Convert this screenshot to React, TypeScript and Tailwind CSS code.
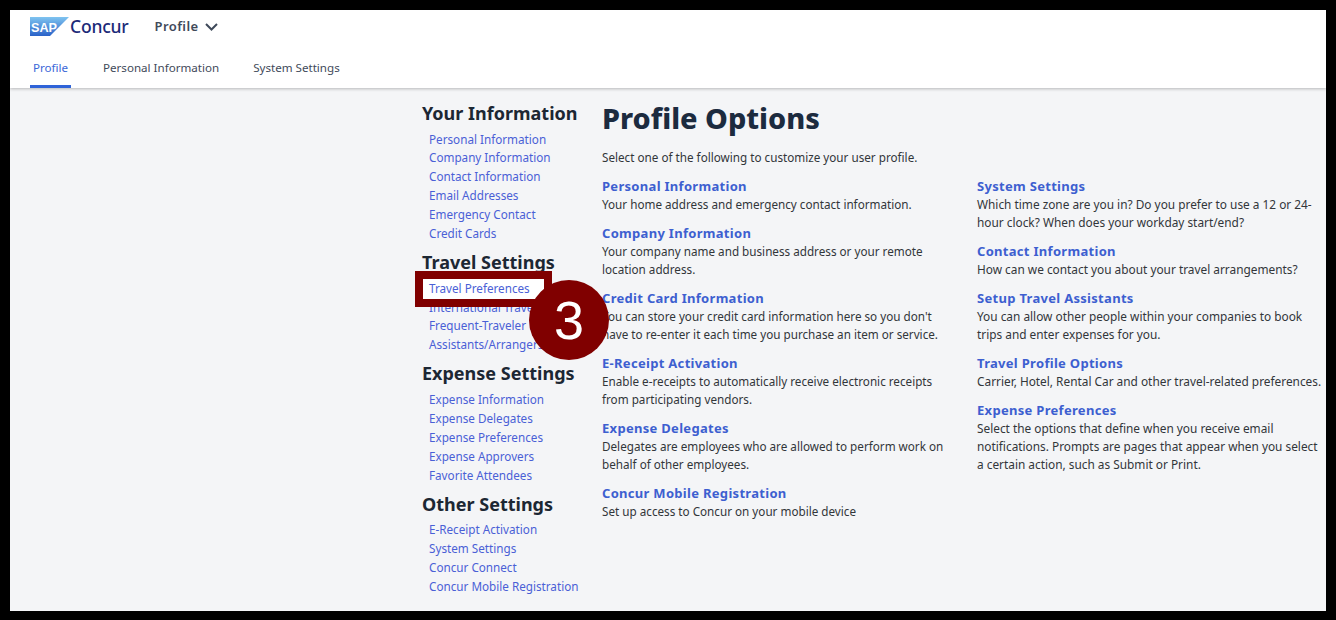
const font = { fontFamily: '"Noto Sans", sans-serif' };

const sections = [
  {
    title: "Your Information",
    links: ["Personal Information", "Company Information", "Contact Information", "Email Addresses", "Emergency Contact", "Credit Cards"],
  },
  {
    title: "Travel Settings",
    links: ["Travel Preferences", "International Travel", "Frequent-Traveler Programs", "Assistants/Arrangers"],
  },
  {
    title: "Expense Settings",
    links: ["Expense Information", "Expense Delegates", "Expense Preferences", "Expense Approvers", "Favorite Attendees"],
  },
  {
    title: "Other Settings",
    links: ["E-Receipt Activation", "System Settings", "Concur Connect", "Concur Mobile Registration"],
  },
];

const leftOptions = [
  { title: "Personal Information", text: "Your home address and emergency contact information." },
  { title: "Company Information", text: "Your company name and business address or your remote location address." },
  { title: "Credit Card Information", text: "You can store your credit card information here so you don't have to re-enter it each time you purchase an item or service." },
  { title: "E-Receipt Activation", text: "Enable e-receipts to automatically receive electronic receipts from participating vendors." },
  { title: "Expense Delegates", text: "Delegates are employees who are allowed to perform work on behalf of other employees." },
  { title: "Concur Mobile Registration", text: "Set up access to Concur on your mobile device" },
];

const rightOptions = [
  { title: "System Settings", text: "Which time zone are you in? Do you prefer to use a 12 or 24-hour clock? When does your workday start/end?" },
  { title: "Contact Information", text: "How can we contact you about your travel arrangements?" },
  { title: "Setup Travel Assistants", text: "You can allow other people within your companies to book trips and enter expenses for you." },
  { title: "Travel Profile Options", text: "Carrier, Hotel, Rental Car and other travel-related preferences." },
  { title: "Expense Preferences", text: "Select the options that define when you receive email notifications. Prompts are pages that appear when you select a certain action, such as Submit or Print." },
];

const Logo = () => (
  <div className="flex items-center gap-[1px]">
    <svg width="39" height="19" viewBox="0 0 39 19">
      <defs>
        <linearGradient id="sap" x1="0" y1="0" x2="0" y2="1">
          <stop offset="0" stopColor="#7fc4f0" />
          <stop offset="1" stopColor="#2a62c8" />
        </linearGradient>
      </defs>
      <polygon points="0,0 39,0 20,19 0,19" fill="url(#sap)" />
      <text x="1" y="14.5" fontSize="13.5" fontWeight="700" fill="#fff" fontFamily="Liberation Sans, sans-serif" textLength="26" lengthAdjust="spacingAndGlyphs">SAP</text>
    </svg>
    <span className="text-[17.5px] leading-none font-medium text-[#1b2a78] tracking-[-0.2px]">Concur</span>
  </div>
);

const Option = ({ title, text, size }: { title: string; text: string; size: string }) => (
  <div className="mb-[11px]">
    <a className="block text-[13px] leading-[18px] font-bold text-[#3d5fd0] tracking-[0.3px]">{title}</a>
    <p className={`${size} leading-[18px] text-[#32363a]`}>{text}</p>
  </div>
);

export default function App() {
  return (
    <div className="w-[1336px] h-[620px] bg-black pt-[10px] pl-[10px] pr-[10px] pb-[9px] overflow-hidden" style={font}>
      <div className="relative h-full bg-[#f4f5f7] flex flex-col">
        <header className="h-[78px] bg-white shadow-[0_1px_3px_rgba(0,0,0,0.25)] px-[20px] shrink-0">
          <div className="flex items-center h-[33px]">
            <Logo />
            <button className="ml-[26px] flex items-center gap-[6px] text-[13px] font-semibold text-[#3f4a5a] tracking-[0.4px]">
              Profile
              <svg width="13" height="8" viewBox="0 0 13 8" fill="none" stroke="#3f4a5a" strokeWidth="2">
                <path d="M1 1 L6.5 6.5 L12 1" />
              </svg>
            </button>
          </div>
          <nav className="flex text-[11.6px] text-[#3f4a5a] mt-[8px]">
            <a className="h-[37px] w-[41px] flex items-center justify-center border-b-[3px] border-[#2f63d8] text-[#3b68d8]">Profile</a>
            <a className="h-[37px] ml-[32px] flex items-center pb-[3px]">Personal Information</a>
            <a className="h-[37px] ml-[34px] flex items-center pb-[3px]">System Settings</a>
          </nav>
        </header>

        {/* white fill behind the highlighted link */}
        <div className="absolute left-[413px] top-[269px] w-[122px] h-[20px] bg-white" />

        <main className="relative flex pl-[412px] pt-[13px]">
          <aside className="w-[180px] shrink-0">
            {sections.map((s) => (
              <div key={s.title} className="mb-[7.2px]">
                <h2 className="text-[18px] leading-[24px] font-bold text-[#1c2733] mb-[4.5px]">{s.title}</h2>
                <ul className="pl-[7px]">
                  {s.links.map((l) => (
                    <li key={l} className="text-[11.7px] leading-[18.9px] text-[#4a5fd6] whitespace-nowrap">{l}</li>
                  ))}
                </ul>
              </div>
            ))}
          </aside>
          <section>
            <h1 className="text-[28.8px] leading-[32px] font-extrabold text-[#1c2b3f] mt-[1px]">Profile Options</h1>
            <p className="text-[11.7px] leading-[18px] text-[#32363a] mt-[14px] mb-[11px]">Select one of the following to customize your user profile.</p>
            <div className="flex">
              <div className="w-[375px] pr-[28px]">
                {leftOptions.map((o) => <Option key={o.title} {...o} size="text-[11.7px]" />)}
              </div>
              <div className="w-[347px]">
                {rightOptions.map((o) => <Option key={o.title} {...o} size="text-[11.85px]" />)}
              </div>
            </div>
          </section>
        </main>

        {/* callout over the link */}
        <div className="absolute left-[405px] top-[261px] w-[137px] h-[36px] border-[8px] border-[#800000]" />
        <div
          className="absolute left-[519px] top-[270px] w-[80px] h-[80px] rounded-full bg-[#800000] text-white flex items-center justify-center text-[54px] leading-none"
          style={{ fontFamily: '"Liberation Sans", sans-serif' }}
        >
          3
        </div>
      </div>
    </div>
  );
}
